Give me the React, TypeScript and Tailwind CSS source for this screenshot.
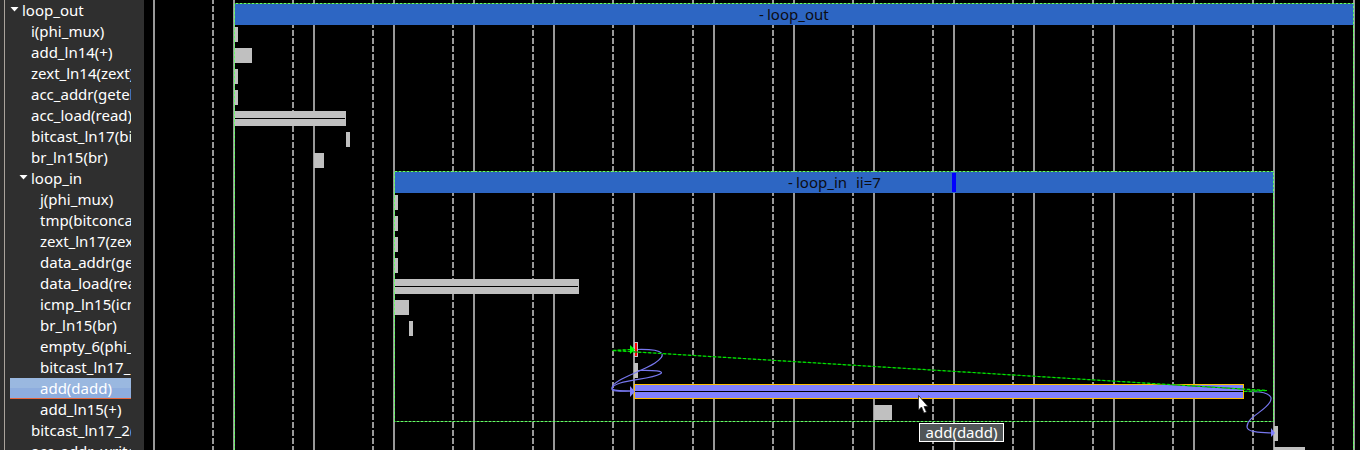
import React from "react";

type Row = { label: string; depth: number; open?: boolean; selected?: boolean };

const rows: Row[] = [
  { label: "loop_out", depth: 0, open: true },
  { label: "i(phi_mux)", depth: 1 },
  { label: "add_ln14(+)", depth: 1 },
  { label: "zext_ln14(zext)", depth: 1 },
  { label: "acc_addr(getelementptr)", depth: 1 },
  { label: "acc_load(read)", depth: 1 },
  { label: "bitcast_ln17(bitcast)", depth: 1 },
  { label: "br_ln15(br)", depth: 1 },
  { label: "loop_in", depth: 1, open: true },
  { label: "j(phi_mux)", depth: 2 },
  { label: "tmp(bitconcatenate)", depth: 2 },
  { label: "zext_ln17(zext)", depth: 2 },
  { label: "data_addr(getelementptr)", depth: 2 },
  { label: "data_load(read)", depth: 2 },
  { label: "icmp_ln15(icmp)", depth: 2 },
  { label: "br_ln15(br)", depth: 2 },
  { label: "empty_6(phi_mux)", depth: 2 },
  { label: "bitcast_ln17_1(bitcast)", depth: 2 },
  { label: "add(dadd)", depth: 2, selected: true },
  { label: "add_ln15(+)", depth: 2 },
  { label: "bitcast_ln17_2(bitcast)", depth: 1 },
  { label: "acc_addr_write(write)", depth: 1 },
];

const indents = ["pl-3", "pl-[21px]", "pl-[30px]"];

function TreeRow({ row }: { row: Row }) {
  const indent = row.open ? (row.depth === 0 ? "pl-0" : "pl-[9px]") : indents[row.depth];
  return (
    <li>
      <button
        type="button"
        aria-expanded={row.open}
        className={`flex h-[21px] w-full items-center overflow-hidden whitespace-nowrap pb-0.5 text-left ${indent} ${
          row.selected
            ? "bg-linear-to-b from-[#9ab8e0] from-50% to-[#8eadde] to-50% shadow-[inset_0_-1px_0_#e8663c]"
            : ""
        }`}
      >
        {row.open && (
          <svg className="mr-[3px] h-[5px] w-[9px] shrink-0" viewBox="0 0 9 5" aria-hidden="true">
            <path d="M0.5 0H8.5L4.5 4.5Z" fill="#fff" />
          </svg>
        )}
        <span>{row.label}</span>
      </button>
    </li>
  );
}

/* Each bar: row index, start and width on the time axis. */
const ops = [
  { row: 1, x: 90, w: 4 },
  { row: 2, x: 90, w: 18 },
  { row: 3, x: 90, w: 4 },
  { row: 4, x: 90, w: 4 },
  { row: 5, x: 90, w: 112, split: true },
  { row: 6, x: 202, w: 4 },
  { row: 7, x: 170, w: 10 },
  { row: 9, x: 250, w: 4 },
  { row: 10, x: 250, w: 4 },
  { row: 11, x: 250, w: 4 },
  { row: 12, x: 250, w: 4 },
  { row: 13, x: 250, w: 185, split: true },
  { row: 14, x: 250, w: 15 },
  { row: 15, x: 265, w: 4 },
  { row: 16, x: 490, w: 4 },
  { row: 17, x: 490, w: 4 },
  { row: 19, x: 730, w: 18 },
  { row: 20, x: 1130, w: 4 },
  { row: 21, x: 1130, w: 31 },
];

const cycles = Array.from({ length: 16 }, (_, i) => i * 80);

function Boundary({ d }: { d: string }) {
  return (
    <g fill="none" shapeRendering="crispEdges" stroke="#66ff66">
      <path d={d} strokeOpacity="0.5" />
      <path d={d} strokeDasharray="2 2" />
    </g>
  );
}

function Schedule() {
  return (
    <svg className="block h-full w-full" role="img" aria-label="Schedule">
      <g stroke="#999" strokeWidth="2" shapeRendering="crispEdges">
        {cycles.map((x) => (
          <g key={x}>
            <line x1={x + 10} x2={x + 10} y1="0" y2="100%" />
            <line x1={x + 69} x2={x + 69} y1="-2" y2="2000" strokeDasharray="6 2" />
          </g>
        ))}
      </g>
      <g shapeRendering="crispEdges">
        <rect x="91" y="4" width="1119" height="21" fill="#2d66c3" />
        <rect x="251" y="172" width="879" height="21" fill="#2d66c3" />
        <rect x="808" y="173" width="4" height="19" fill="#00f" />
        {ops.map((o) => (
          <g key={o.row}>
            <rect x={o.x} y={o.row * 21 + 6} width={o.w} height="15" fill="#c0c0c0" />
            {o.split && <rect x={o.x + 1} y={o.row * 21 + 13} width={o.w - 2} height="1" fill="#000" />}
          </g>
        ))}
        <rect x="491" y="343" width="2" height="13" fill="#f00" />
        <rect x="490.5" y="384.5" width="609" height="14" fill="#8080ff" stroke="#ffc000" />
        <rect x="491" y="391" width="608" height="1" fill="#000" />
      </g>
      <Boundary d="M90.5 450V3.5H1209.5V450" />
      <Boundary d="M250.5 171.5V421.5H1129.5V171.5H250.5" />
      <g fill="none" stroke="#7777ee" strokeWidth="1.2">
        <path d="M494 349.5C522 349 523 355 511 363C497 372 468 380 468 388C468 391 478 391 487 391" />
        <path d="M494 370.5C509 370 522 371 516 374C506 380 468 380 468 389C468 392 478 391 487 391" />
        <path d="M1100 391.5C1123 391 1130 395 1126 402C1120 412 1103 417 1103 427C1104 433 1117 432 1128 433" />
      </g>
      <path d="M486 386L491 391.5L486 397ZM1127 428L1131 433L1127 437Z" fill="#8080ff" />
      <path d="M1100 391.5L1123 390.5L468 350.5L488 349.5" fill="none" stroke="#005c00" />
      <path
        d="M1100 391.5L1123 390.5L468 350.5L488 349.5"
        fill="none"
        stroke="#00e600"
        strokeWidth="1.2"
        strokeDasharray="3 2"
      />
      <path d="M486 345L491 349.5L486 354Z" fill="#00ff00" />
      <g fill="#0c0c12" fontSize="15">
        <text x="615" y="20">-</text>
        <text x="623" y="20">loop_out</text>
        <text x="644" y="188">-</text>
        <text x="652" y="188">loop_in</text>
        <text x="712" y="188">ii=7</text>
      </g>
    </svg>
  );
}

export default function App() {
  return (
    <div className="flex h-screen overflow-hidden bg-black font-['Noto_Sans',sans-serif] text-[15px] leading-5 text-white">
      <nav aria-label="Operations" className="w-36 shrink-0 overflow-hidden bg-[#2f2f2f] pl-1">
        <ul className="min-h-full border-l border-[#aaa39c] pr-[13px] pl-[5px]">
          {rows.map((row, i) => (
            <TreeRow key={i} row={row} />
          ))}
        </ul>
      </nav>
      <main className="relative min-w-0 flex-1 overflow-hidden">
        <Schedule />
        <div
          role="tooltip"
          className="absolute top-[423px] left-[775px] flex h-[19px] w-[85px] items-center justify-center border border-white bg-[#505557] pb-0.5"
        >
          add(dadd)
        </div>
        <svg className="absolute top-[395px] left-[774px] h-[20px] w-[12px]" viewBox="0 0 12 20" aria-hidden="true">
          <path d="M0.5 0.5V15L3.5 12L6 18L8.5 17L6 11.5H10Z" fill="#fff" stroke="#222" strokeWidth="0.8" />
        </svg>
      </main>
    </div>
  );
}
